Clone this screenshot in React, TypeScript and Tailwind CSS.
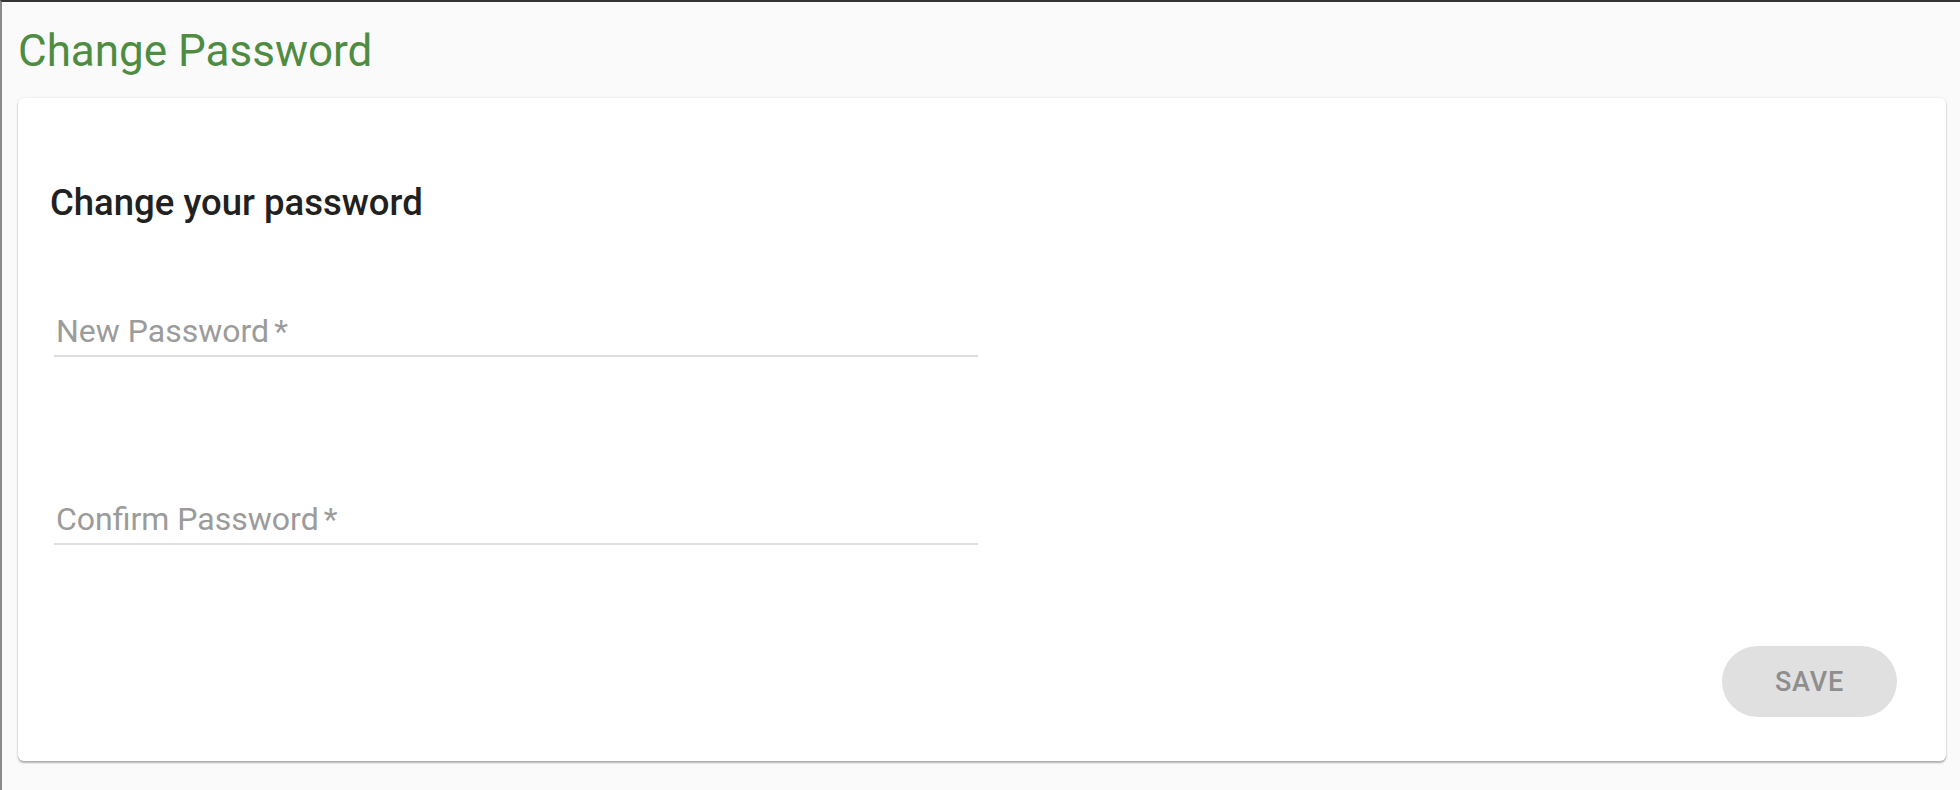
import React from "react";

function Field({ label }: { label: string }) {
  return (
    <div className="w-[924px]">
      <div className="h-[38px] leading-[38px] pl-[2px] text-[32px] text-[#9b9b9b] whitespace-nowrap">
        {label}
        <span className="ml-[5px]">*</span>
      </div>
      <div className="mt-[5px] h-[2px] bg-[#dedede]" />
    </div>
  );
}

export default function App() {
  return (
    <div
      className="relative w-[1960px] h-[790px] overflow-hidden bg-[#fafafa] border-t-2 border-l-2 border-t-[#353535] border-l-[#8a8a8a]"
      style={{ fontFamily: "Roboto, 'Noto Sans', sans-serif" }}
    >
      <div className="absolute left-[-2px] top-[565px] w-[2px] h-[16px] bg-[#3a3a3a]" />
      <h1 className="pt-[23px] pl-[16px] h-[74px] text-[44px] leading-[52px] font-normal text-[#4e8c42]">
        Change Password
      </h1>
      <div className="mt-[22px] ml-[16px] w-[1928px] h-[663px] bg-white rounded-[6px] shadow-[0_2px_2px_rgba(0,0,0,0.28),0_0_3px_rgba(0,0,0,0.10)] flex flex-col pt-[83px] pb-[44px]">
        <h2 className="pl-[32px] text-[36.5px] leading-[44px] font-medium text-[#212121]">
          Change your password
        </h2>
        <div className="pl-[36px] mt-[87px] flex flex-col gap-[143px]">
          <Field label="New Password" />
          <Field label="Confirm Password" />
        </div>
        <div className="mt-auto flex justify-end pr-[49px]">
          <button className="w-[175px] h-[71px] rounded-full bg-[#e0e0e0] text-[#8e8e8e] text-[27px] font-medium tracking-[0.03em] pt-[2px]">
            SAVE
          </button>
        </div>
      </div>
    </div>
  );
}
